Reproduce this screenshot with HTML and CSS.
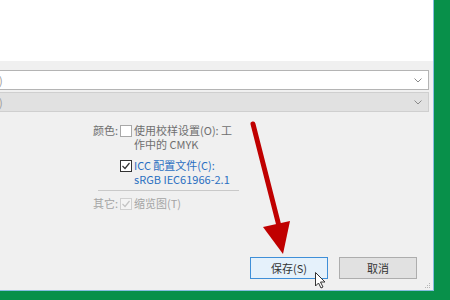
FILE: index.html
```html
<!doctype html>
<html lang="zh-CN">
  <head>
    <meta charset="UTF-8" />
    <title>另存为</title>
    <link rel="stylesheet" href="styles.css">
  </head>
  <body>
    <div class="dialog">
      <div class="preview"></div>

      <div class="combos">
        <div class="combo">
          <span class="combo-text">)</span>
          <svg class="chevron" width="8" height="5" viewBox="0 0 8 5"><path d="M0.5 0.5 L4 4 L7.5 0.5" fill="none" stroke="#8a8a8a" stroke-width="1"/></svg>
        </div>
        <div class="combo disabled">
          <span class="combo-text">)</span>
          <svg class="chevron" width="8" height="5" viewBox="0 0 8 5"><path d="M0.5 0.5 L4 4 L7.5 0.5" fill="none" stroke="#8a8a8a" stroke-width="1"/></svg>
        </div>
      </div>

      <div class="options">
        <div class="opt-row">
          <span class="opt-label">颜色:</span>
          <span class="check"></span>
          <span class="opt-text">使用校样设置(O): 工作中的 CMYK</span>
        </div>
        <div class="opt-row icc">
          <span class="opt-label"></span>
          <span class="check checked">
            <svg width="10" height="10" viewBox="0 0 10 10"><path d="M1.5 5 L4 7.5 L8.5 2" fill="none" stroke="#333" stroke-width="1.2"/></svg>
          </span>
          <span class="opt-text link">ICC 配置文件(C): sRGB IEC61966-2.1</span>
        </div>
        <div class="separator"></div>
        <div class="opt-row muted">
          <span class="opt-label">其它:</span>
          <span class="check checked dim">
            <svg width="10" height="10" viewBox="0 0 10 10"><path d="M1.5 5 L4 7.5 L8.5 2" fill="none" stroke="#c4c4c4" stroke-width="1.2"/></svg>
          </span>
          <span class="opt-text">缩览图(T)</span>
        </div>
      </div>

      <div class="button-row">
        <button class="btn primary">保存(S)</button>
        <button class="btn">取消</button>
      </div>
    </div>

    <!-- annotation arrow, mouse pointer and the resize grip drawn on top -->
    <svg class="marks" width="450" height="300" viewBox="0 0 450 300">
      <line x1="253" y1="124" x2="279" y2="226" stroke="#c00000" stroke-width="5" stroke-linecap="round" />
      <polygon points="263,227 290,221 283,254" fill="#c00000" />
      <path d="M315.5 272.5 V286 L318.5 283 L321 288 L323 287 L320.5 282 H325 Z" fill="#fff" stroke="#333" stroke-width="1" stroke-linejoin="round" />
      <g fill="#b5b5b5">
        <rect x="429" y="283" width="1" height="1" />
        <rect x="427" y="285" width="1" height="1" />
        <rect x="429" y="285" width="1" height="1" />
        <rect x="425" y="287" width="1" height="1" />
        <rect x="427" y="287" width="1" height="1" />
        <rect x="429" y="287" width="1" height="1" />
      </g>
    </svg>
  </body>
</html>
```

FILE: styles.css
```css
body {
  margin: 0;
  width: 450px;
  height: 300px;
  overflow: hidden;
  position: relative;
  background-color: #08904a;
  font-family: "Noto Sans CJK SC", "Noto Sans", sans-serif;
  font-size: 11px;
  color: #333;
}

.dialog {
  box-sizing: border-box;
  width: 434px;
  height: 291px;
  display: flex;
  flex-direction: column;
  background-color: #f0f0f0;
  border-right: 1px solid #86bde0;
  border-bottom: 1px solid #86bde0;
}

.preview {
  height: 61px;
  background-color: #fff;
}

.combos {
  display: flex;
  flex-direction: column;
  gap: 2px;
  margin: 9px 4px 0 -10px;
}

.combo {
  box-sizing: border-box;
  height: 20px;
  display: flex;
  align-items: center;
  justify-content: space-between;
  padding: 0 6px 0 8px;
  background-color: #fff;
  border: 1px solid #b4b4b4;
}

.combo.disabled {
  background-color: #e1e1e1;
  border-color: #cfcfcf;
}

.combo-text {
  color: #9a9a9a;
  line-height: 14px;
}

.options {
  margin: 11px 0 0 90px;
  display: flex;
  flex-direction: column;
}

.opt-row {
  display: flex;
  align-items: flex-start;
  line-height: 14px;
  color: #6f6f6f;
}

.opt-row.icc {
  margin-top: 7px;
}

.opt-label {
  width: 28px;
  text-align: right;
  white-space: nowrap;
}

.check {
  box-sizing: border-box;
  width: 12px;
  height: 12px;
  margin: 2px 2px 0 2px;
  display: flex;
  align-items: center;
  justify-content: center;
  background-color: #fff;
  border: 1px solid #a8a8a8;
}

.check.checked {
  border-color: #333;
}

.check.dim {
  border-color: #d0d0d0;
  background-color: #f4f4f4;
}

.opt-text {
  width: 104px;
}

.link {
  color: #2a6fc1;
}

.separator {
  width: 141px;
  height: 1px;
  margin: 4px 0 5px 8px;
  background-color: #c9c9c9;
}

.muted {
  color: #a4a4a4;
}

.button-row {
  margin-top: auto;
  margin-bottom: 11px;
  display: flex;
  justify-content: flex-end;
  gap: 11px;
  padding-right: 16px;
}

.btn {
  box-sizing: border-box;
  width: 78px;
  height: 22px;
  padding: 0;
  font-family: inherit;
  font-size: 11px;
  color: #333;
  background-color: #e1e1e1;
  border: 1px solid #adadad;
}

.btn.primary {
  background-color: #e5f1fb;
  border-color: #3f8fd8;
}

.marks {
  position: absolute;
  left: 0;
  top: 0;
  pointer-events: none;
}
```
